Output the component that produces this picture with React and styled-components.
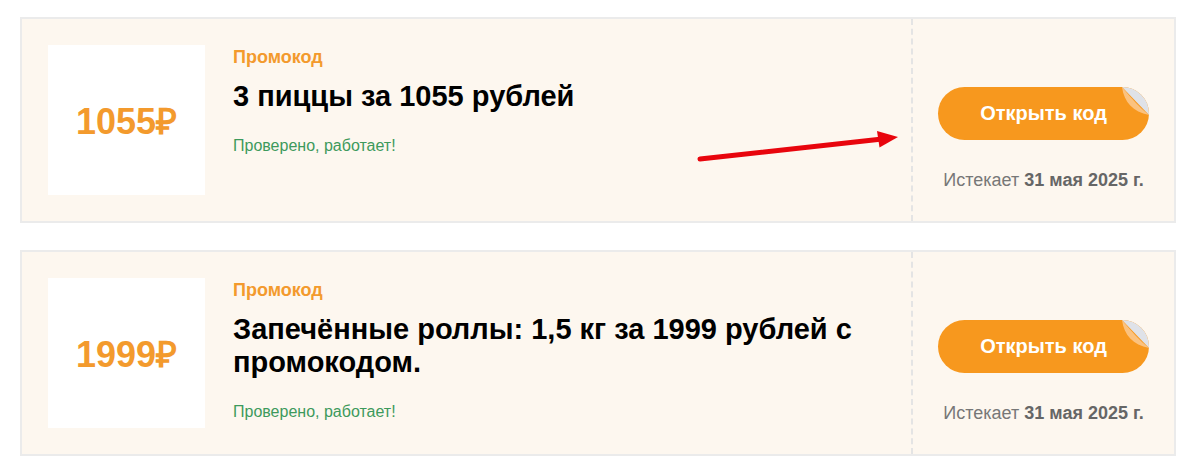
import React from "react";
import styled, { createGlobalStyle } from "styled-components";

const GlobalStyle = createGlobalStyle`
  body {
    margin: 0;
    background: #ffffff;
    font-family: "Liberation Sans", Arial, sans-serif;
  }
`;

const coupons = [
  {
    price: "1055₽",
    title: "3 пиццы за 1055 рублей",
    arrow: true,
  },
  {
    price: "1999₽",
    title: "Запечённые роллы: 1,5 кг за 1999 рублей с промокодом.",
  },
];

export default function App() {
  return (
    <>
      <GlobalStyle />
      <List>
        {coupons.map((c) => (
          <Card key={c.price}>
            <Main>
              <PriceBox>{c.price}</PriceBox>
              <Info>
                <Label>Промокод</Label>
                <Title>{c.title}</Title>
                <Verified>Проверено, работает!</Verified>
              </Info>
            </Main>
            <Side>
              <OpenButton>
                Открыть код
                <Peel viewBox="0 0 30 30" width="30" height="30">
                  <path d="M3 0 L30 0 L30 28 Z" fill="#dfe2e8" />
                  <path d="M3 0 C5 15 14 25 30 28 C21 21 12 11 3 0 Z" fill="#fbc27f" />
                </Peel>
              </OpenButton>
              <Expires>
                Истекает <b>31 мая 2025 г.</b>
              </Expires>
            </Side>
            {c.arrow && (
              <Arrow viewBox="0 0 210 40" width="210" height="40">
                <line x1="5" y1="29" x2="185" y2="9.2" stroke="#e8050d" strokeWidth="5" strokeLinecap="round" />
                <polygon points="203,7 184.5,17.5 182,1" fill="#e8050d" />
              </Arrow>
            )}
          </Card>
        ))}
      </List>
    </>
  );
}

const List = styled.div`
  display: flex;
  flex-direction: column;
  gap: 27px;
  padding: 17px 12px 0 20px;
`;

const Card = styled.div`
  position: relative;
  display: flex;
  border: 2px solid #ebebeb;
  background: #fdf7ef;
`;

const Main = styled.div`
  flex: 1;
  display: flex;
  gap: 28px;
  padding: 26px 0 26px 26px;
`;

const PriceBox = styled.div`
  flex: none;
  width: 157px;
  height: 150px;
  background: #ffffff;
  display: flex;
  align-items: center;
  justify-content: center;
  color: #f39a2d;
  font-size: 36px;
  font-weight: 700;
`;

const Info = styled.div`
  display: flex;
  flex-direction: column;
  padding-top: 2px;
`;

const Label = styled.div`
  color: #f39a2d;
  font-size: 18px;
  font-weight: 700;
  line-height: 20px;
`;

const Title = styled.div`
  margin-top: 13px;
  color: #000000;
  font-size: 29px;
  font-weight: 700;
  line-height: 33px;
  max-width: 640px;
`;

const Verified = styled.div`
  margin-top: 24px;
  color: #3d9a5c;
  font-size: 16px;
  line-height: 18px;
`;

const Side = styled.div`
  flex: none;
  width: 261px;
  border-left: 2px dashed #e4e4e4;
  display: flex;
  flex-direction: column;
  align-items: center;
  padding-top: 68px;
`;

const OpenButton = styled.div`
  position: relative;
  overflow: hidden;
  width: 211px;
  height: 53px;
  border-radius: 27px;
  background: #f7981e;
  color: #ffffff;
  font-size: 20px;
  font-weight: 700;
  display: flex;
  align-items: center;
  justify-content: center;
`;

const Peel = styled.svg`
  position: absolute;
  top: 0;
  right: 0;
`;

const Expires = styled.div`
  margin-top: 30px;
  color: #777777;
  font-size: 18px;
  line-height: 20px;

  b {
    color: #666666;
  }
`;

const Arrow = styled.svg`
  position: absolute;
  left: 673px;
  top: 111px;
`;
